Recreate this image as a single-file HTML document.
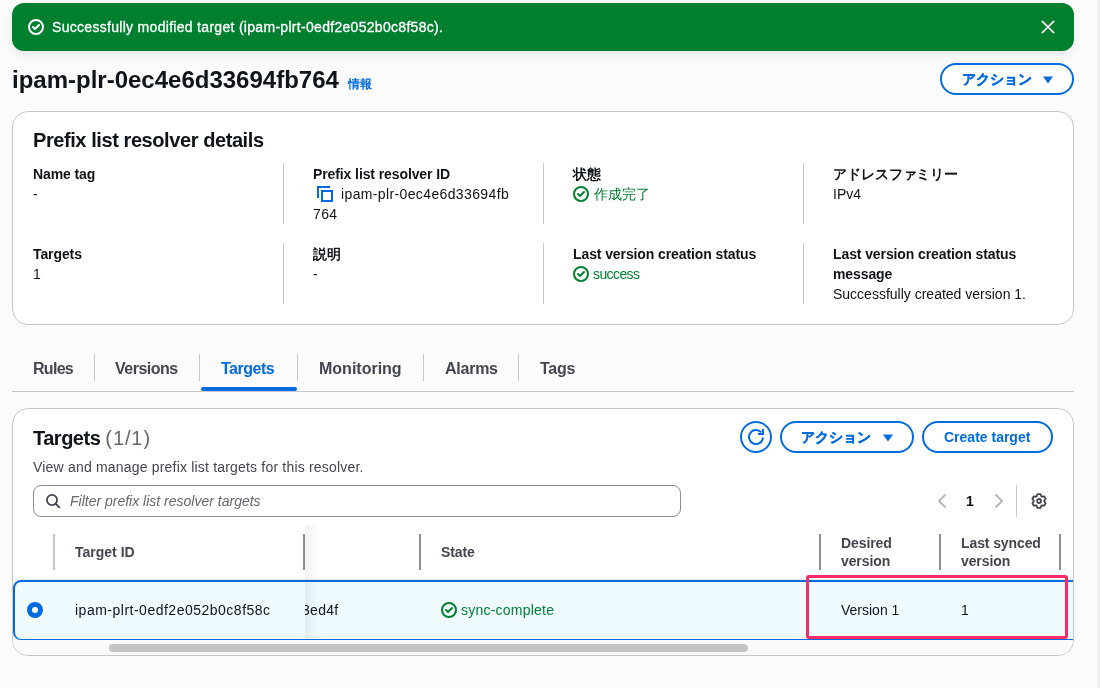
<!DOCTYPE html>
<html><head><meta charset="utf-8">
<style>
*{box-sizing:border-box;margin:0;padding:0}
html,body{width:1100px;height:688px;overflow:hidden}
body{background:#fbfbfc;font-family:"Liberation Sans",sans-serif;color:#0f141a;font-size:14px;line-height:20px;position:relative}
.abs{position:absolute;white-space:nowrap}
.edge1{position:absolute;left:1098px;top:0;width:1px;height:688px;background:#e6e6e8}
.edge2{position:absolute;left:1099px;top:0;width:1px;height:688px;background:#f3f3f4}
.flash{position:absolute;left:12px;top:3px;width:1062px;height:48px;background:#00802f;border-radius:12px;box-shadow:0 4px 10px rgba(0,7,22,0.08)}
.flash .txt{position:absolute;left:40px;top:14px;color:#fff;letter-spacing:0.3px;line-height:20px;-webkit-text-stroke:0.3px #fff}
.title{position:absolute;left:12px;top:65px;font-size:24px;font-weight:bold;line-height:30px;color:#0f141a}
.info{position:absolute;left:347.5px;top:76px;font-size:12px;font-weight:bold;color:#006ce0;line-height:16px}
.btn{position:absolute;height:32px;border:2px solid #006ce0;border-radius:20px;background:#fff;color:#006ce0;font-weight:bold;font-size:14px;line-height:28px}
.jb{-webkit-text-stroke:0.35px #006ce0}
.container{position:absolute;left:12px;width:1062px;background:#fff;border:1px solid #c6c6cd;border-radius:16px}
.h2{position:absolute;font-size:20px;font-weight:bold;line-height:24px;letter-spacing:-0.42px}
.lbl{position:absolute;font-weight:bold;line-height:20px;letter-spacing:-0.1px}
.val{position:absolute;line-height:20px}
.vdiv{position:absolute;width:1px;background:#c6c6cd}
.green{color:#00802f}
.tab{position:absolute;top:358px;font-size:16px;font-weight:bold;color:#424650;line-height:22px;letter-spacing:-0.25px}
.tsep{position:absolute;top:354px;width:1px;height:27px;background:#c6c6cd}
</style></head><body>
<div id="root" style="position:absolute;left:0;top:0;width:1100px;height:688px;will-change:transform">
<div class="edge1"></div><div class="edge2"></div>

<div class="flash">
  <svg class="abs" style="left:16px;top:16px" width="16" height="16" viewBox="0 0 16 16" fill="none" stroke="#fff" stroke-width="2" stroke-linecap="round" stroke-linejoin="round"><circle cx="8" cy="8" r="7"/><path d="M5 8l2 2 4-4"/></svg>
  <div class="txt">Successfully modified target (ipam-plrt-0edf2e052b0c8f58c).</div>
  <svg class="abs" style="left:1028px;top:15.5px" width="16" height="16" viewBox="0 0 16 16" fill="none" stroke="#f2eef4" stroke-width="1.7" stroke-linecap="round"><path d="M2.3 2.3l11.4 11.4M13.7 2.3L2.3 13.7"/></svg>
</div>

<div class="title">ipam-plr-0ec4e6d33694fb764</div>
<div class="info">情報</div>
<div class="btn" style="left:940px;top:63px;width:134px"><span class="abs jb" style="left:20px;top:0">アクション</span>
<svg class="abs" style="left:100px;top:8px" width="12" height="12" viewBox="0 0 12 12"><path d="M1 3.5h10L6 10.5z" fill="#006ce0"/></svg></div>

<!-- details container -->
<div class="container" style="top:111px;height:214px">
</div>
<div class="h2" style="left:33px;top:128px">Prefix list resolver details</div>

<div class="lbl" style="left:33px;top:164px">Name tag</div>
<div class="val" style="left:33px;top:184px">-</div>
<div class="vdiv" style="left:283px;top:163px;height:61px"></div>
<div class="lbl" style="left:313px;top:164px">Prefix list resolver ID</div>
<svg class="abs" style="left:317px;top:186px" width="16" height="16" viewBox="0 0 16 16" fill="none" stroke="#006ce0" stroke-width="2"><path d="M1 12V1h12"/><rect x="5" y="5" width="10" height="10"/></svg>
<div class="val" style="left:341px;top:184px;letter-spacing:0.37px">ipam-plr-0ec4e6d33694fb</div>
<div class="val" style="left:313px;top:204px;letter-spacing:0.37px">764</div>
<div class="vdiv" style="left:543px;top:163px;height:61px"></div>
<div class="lbl" style="left:573px;top:164px">状態</div>
<svg class="abs" style="left:573px;top:186px" width="16" height="16" viewBox="0 0 16 16" fill="none" stroke="#00802f" stroke-width="2" stroke-linecap="round" stroke-linejoin="round"><circle cx="8" cy="8" r="7"/><path d="M5 8l2 2 4-4"/></svg>
<div class="val green" style="left:594px;top:184px">作成完了</div>
<div class="vdiv" style="left:803px;top:163px;height:61px"></div>
<div class="lbl" style="left:833px;top:164px">アドレスファミリー</div>
<div class="val" style="left:833px;top:184px">IPv4</div>

<div class="lbl" style="left:33px;top:244px">Targets</div>
<div class="val" style="left:33px;top:264px">1</div>
<div class="vdiv" style="left:283px;top:243px;height:61px"></div>
<div class="lbl" style="left:313px;top:244px">説明</div>
<div class="val" style="left:313px;top:264px">-</div>
<div class="vdiv" style="left:543px;top:243px;height:61px"></div>
<div class="lbl" style="left:573px;top:244px">Last version creation status</div>
<svg class="abs" style="left:573px;top:266px" width="16" height="16" viewBox="0 0 16 16" fill="none" stroke="#00802f" stroke-width="2" stroke-linecap="round" stroke-linejoin="round"><circle cx="8" cy="8" r="7"/><path d="M5 8l2 2 4-4"/></svg>
<div class="val green" style="left:593px;top:264px;letter-spacing:-0.6px">success</div>
<div class="vdiv" style="left:803px;top:243px;height:61px"></div>
<div class="lbl" style="left:833px;top:244px">Last version creation status</div>
<div class="lbl" style="left:833px;top:264px">message</div>
<div class="val" style="left:833px;top:284px">Successfully created version 1.</div>

<!-- tabs -->
<div class="tab" style="left:33px;letter-spacing:-0.7px">Rules</div>
<div class="tsep" style="left:94px"></div>
<div class="tab" style="left:115px;letter-spacing:-0.5px">Versions</div>
<div class="tsep" style="left:199px"></div>
<div class="tab" style="left:221px;color:#006ce0;letter-spacing:-0.5px">Targets</div>
<div class="tsep" style="left:297px"></div>
<div class="tab" style="left:319px;letter-spacing:0">Monitoring</div>
<div class="tsep" style="left:423px"></div>
<div class="tab" style="left:445px">Alarms</div>
<div class="tsep" style="left:518px"></div>
<div class="tab" style="left:540px">Tags</div>
<div class="abs" style="left:12px;top:391px;width:1062px;height:1px;background:#c6c6cd"></div>
<div class="abs" style="left:201px;top:387px;width:96px;height:4px;background:#006ce0;border-radius:2px"></div>

<!-- targets container -->
<div class="container" style="top:408px;height:248px;overflow:hidden">
  <!-- table area (coords relative to container: subtract 13,409) -->
  <div class="abs" style="left:0;top:170px;width:1061px;height:1px;background:#ebebf0"></div>
  <!-- selected row -->
  <div class="abs" style="left:0;top:171px;width:1200px;height:60px;background:#f0fbff;border:2px solid #006ce0;border-bottom-width:1.5px;border-radius:8px"></div>
  <!-- scrollbar track -->
  <div class="abs" style="left:0;top:231px;width:1061px;height:16px;background:#fafafa"></div>
  <div class="abs" style="left:96px;top:235px;width:639px;height:8px;background:#c4c4c4;border-radius:4px"></div>
  <!-- sticky shadow -->
  <div class="abs" style="left:292px;top:116px;width:14px;height:115px;background:linear-gradient(to right,rgba(0,0,0,0.06),rgba(0,0,0,0))"></div>
</div>
<div class="h2" style="left:33px;top:426px;letter-spacing:-0.5px">Targets <span style="font-weight:normal;color:#656871;letter-spacing:0.9px">(1/1)</span></div>
<div class="val" style="left:33px;top:457px;color:#424650;letter-spacing:0.19px">View and manage prefix list targets for this resolver.</div>

<div class="btn" style="left:740px;top:421px;width:32px;border-radius:50%">
<svg class="abs" style="left:6px;top:6px" width="16" height="16" viewBox="0 0 16 16" fill="none" stroke="#006ce0" stroke-width="2"><path d="M10 5h5V0"/><path d="M15 8.5A7 7 0 1 1 13.2 3.4"/></svg></div>
<div class="btn" style="left:780px;top:421px;width:134px"><span class="abs jb" style="left:19px;top:0">アクション</span>
<svg class="abs" style="left:100px;top:8px" width="12" height="12" viewBox="0 0 12 12"><path d="M1 3.5h10L6 10.5z" fill="#006ce0"/></svg></div>
<div class="btn" style="left:922px;top:421px;width:131px"><span class="abs" style="left:20px;top:0">Create target</span></div>

<!-- filter -->
<div class="abs" style="left:33px;top:485px;width:648px;height:32px;border:1px solid #8c8c94;border-radius:8px;background:#fff"></div>
<svg class="abs" style="left:45px;top:493px" width="16" height="16" viewBox="0 0 16 16" fill="none" stroke="#424650" stroke-width="1.8" stroke-linecap="round"><circle cx="7" cy="7" r="5.1"/><path d="M14.3 14.3l-3.8-3.8"/></svg>
<div class="val" style="left:70px;top:491px;font-style:italic;color:#656871">Filter prefix list resolver targets</div>

<!-- pagination -->
<svg class="abs" style="left:933.5px;top:493px" width="16" height="16" viewBox="0 0 16 16" fill="none" stroke="#b4b4bb" stroke-width="1.8" stroke-linecap="round" stroke-linejoin="round"><path d="M11 2L5 8l6 6"/></svg>
<div class="val" style="left:966px;top:491px;font-weight:bold">1</div>
<svg class="abs" style="left:990.5px;top:493px" width="16" height="16" viewBox="0 0 16 16" fill="none" stroke="#b4b4bb" stroke-width="1.8" stroke-linecap="round" stroke-linejoin="round"><path d="M5 2l6 6-6 6"/></svg>
<div class="abs" style="left:1016px;top:485px;width:1px;height:32px;background:#c6c6cd"></div>
<svg class="abs" style="left:1031px;top:493px" width="16" height="16" viewBox="0 0 16 16" fill="none" stroke="#424650" stroke-width="1.8" stroke-linejoin="round"><path d="M6.54 1.15 L9.46 1.15 L10.55 3.58 L13.20 3.32 L14.66 5.84 L13.10 8.00 L14.66 10.16 L13.20 12.68 L10.55 12.42 L9.46 14.85 L6.54 14.85 L5.45 12.42 L2.80 12.68 L1.34 10.16 L2.90 8.00 L1.34 5.84 L2.80 3.32 L5.45 3.58Z"/><circle cx="8" cy="8" r="2"/></svg>

<!-- table header -->
<div class="abs" style="left:53px;top:534px;width:2px;height:36px;background:#c6c6cd"></div>
<div class="lbl" style="left:75px;top:542px;color:#424650;letter-spacing:0">Target ID</div>
<div class="abs" style="left:303px;top:534px;width:2px;height:36px;background:#8c8c94"></div>
<div class="abs" style="left:419px;top:534px;width:2px;height:36px;background:#8c8c94"></div>
<div class="lbl" style="left:441px;top:542px;color:#424650">State</div>
<div class="abs" style="left:819px;top:534px;width:2px;height:36px;background:#8c8c94"></div>
<div class="lbl" style="left:841px;top:534px;color:#424650;line-height:18px">Desired<br>version</div>
<div class="abs" style="left:939px;top:534px;width:2px;height:36px;background:#8c8c94"></div>
<div class="lbl" style="left:961px;top:534px;color:#424650;line-height:18px">Last synced<br>version</div>
<div class="abs" style="left:1059px;top:534px;width:2px;height:36px;background:#8c8c94"></div>

<!-- row content -->
<div class="abs" style="left:27px;top:602px;width:16px;height:16px;border-radius:50%;border:5px solid #006ce0;background:#fff"></div>
<div class="val" style="left:75px;top:600px;letter-spacing:0.5px">ipam-plrt-0edf2e052b0c8f58c</div>
<div class="val" style="left:305px;top:600px;overflow:hidden;width:40px"><span style="position:relative;left:-3px;letter-spacing:0.3px">3ed4f</span></div>
<svg class="abs" style="left:441px;top:602px" width="16" height="16" viewBox="0 0 16 16" fill="none" stroke="#00802f" stroke-width="2" stroke-linecap="round" stroke-linejoin="round"><circle cx="8" cy="8" r="7"/><path d="M5 8l2 2 4-4"/></svg>
<div class="val green" style="left:461px;top:600px;letter-spacing:0.23px">sync-complete</div>
<div class="val" style="left:841px;top:600px">Version 1</div>
<div class="val" style="left:961px;top:600px">1</div>

<!-- highlight -->
<div class="abs" style="left:806px;top:575px;width:262px;height:64px;border:3px solid #fa2a64;border-radius:3px"></div>

</div>
</body></html>
